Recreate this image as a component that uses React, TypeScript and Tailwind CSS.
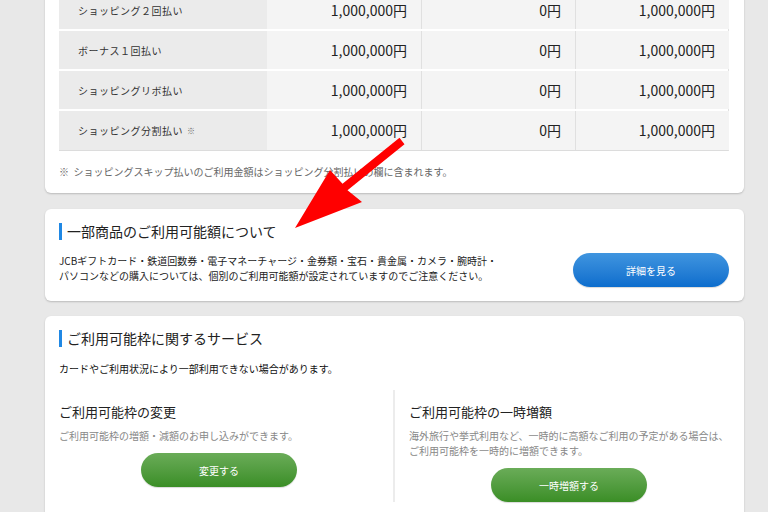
import React from "react";

interface LimitRow {
  label: string;
  note?: boolean;
  limit: string;
  used: string;
  available: string;
}

const rows: LimitRow[] = [
  { label: "ショッピング２回払い", limit: "1,000,000円", used: "0円", available: "1,000,000円" },
  { label: "ボーナス１回払い", limit: "1,000,000円", used: "0円", available: "1,000,000円" },
  { label: "ショッピングリボ払い", limit: "1,000,000円", used: "0円", available: "1,000,000円" },
  { label: "ショッピング分割払い", note: true, limit: "1,000,000円", used: "0円", available: "1,000,000円" },
];

const SectionTitle = ({ children }: { children: React.ReactNode }) => (
  <h2 className="flex items-center gap-[5px] text-[14px] leading-[24px] text-[#222]">
    <span className="w-[3px] h-[17px] bg-[#2088e4]" />
    {children}
  </h2>
);

const GreenButton = ({ label }: { label: string }) => (
  <button className="mx-auto flex h-[34px] w-[156px] items-center justify-center rounded-full bg-gradient-to-b from-[#6aac58] to-[#3a8e25] text-[10px] text-white shadow-[0_1px_1px_rgba(0,0,0,0.15)]">
    {label}
  </button>
);

const Arrow = () => (
  <svg
    className="pointer-events-none absolute left-0 top-0"
    width="768"
    height="512"
    viewBox="0 0 768 512"
  >
    <polygon
      fill="#ff0000"
      points="399.5,137.8 404.5,144.2 347.5,190.2 362,202 295,228 330,170 342.5,183.8"
    />
  </svg>
);

export default function App() {
  return (
    <div className="relative h-[512px] w-[768px] overflow-hidden bg-[#e8e8e8] font-['Noto_Sans_CJK_JP',sans-serif] text-[#222]">
      {/* 利用可能額テーブル */}
      <section className="-mt-[9px] ml-[45px] w-[699px] rounded-b-[6px] bg-white px-[14px] pb-[13px] shadow-[0_1px_2px_rgba(0,0,0,0.2)]">
        <div className="w-[670px] border-r border-[#e0e0e0]">
          {rows.map((row, i) => (
            <div
              key={row.label}
              className={
                "grid h-[40px] grid-cols-[208px_154px_154px_154px] " +
                (i === rows.length - 1 ? "border-b border-[#dcdcdc]" : "border-b-2 border-white")
              }
            >
              <div className="flex items-center bg-[#ebebeb] pl-[19px] text-[10px] tracking-[0.5px] text-[#333]">
                {row.label}
                {row.note && <span className="ml-[4px] text-[8px] text-[#666]">※</span>}
              </div>
              <div className="flex items-center justify-end bg-[#f4f4f4] pr-[14px] text-[14px]">
                {row.limit}
              </div>
              <div className="flex items-center justify-end border-l border-[#e0e0e0] bg-[#f4f4f4] pr-[14px] text-[14px]">
                {row.used}
              </div>
              <div className="flex items-center justify-end border-l border-[#e0e0e0] bg-[#f4f4f4] pr-[14px] text-[14px]">
                {row.available}
              </div>
            </div>
          ))}
        </div>
        <p className="mt-[13px] text-[10px] leading-[16px] text-[#666]">
          ※&nbsp;&nbsp;ショッピングスキップ払いのご利用金額はショッピング分割払いの欄に含まれます。
        </p>
      </section>

      {/* 一部商品 */}
      <section className="ml-[45px] mt-[16px] w-[699px] rounded-[6px] bg-white px-[14px] pb-[14px] pt-[10px] shadow-[0_1px_2px_rgba(0,0,0,0.2)]">
        <SectionTitle>一部商品のご利用可能額について</SectionTitle>
        <div className="mt-[10px] flex items-start justify-between pr-px">
          <p className="whitespace-nowrap text-[10px] leading-[15px] text-[#222]">
            JCBギフトカード・鉄道回数券・電子マネーチャージ・金券類・宝石・貴金属・カメラ・腕時計・
            <br />
            パソコンなどの購入については、個別のご利用可能額が設定されていますのでご注意ください。
          </p>
          <button className="flex h-[34px] w-[156px] items-center justify-center rounded-full bg-gradient-to-b from-[#3f95df] to-[#0a6dcd] text-[10px] text-white shadow-[0_1px_1px_rgba(0,0,0,0.15)]">
            詳細を見る
          </button>
        </div>
      </section>

      {/* サービス */}
      <section className="ml-[45px] mt-[15px] w-[699px] rounded-[6px] bg-white px-[14px] pb-[20px] pt-[10px] shadow-[0_1px_2px_rgba(0,0,0,0.2)]">
        <SectionTitle>ご利用可能枠に関するサービス</SectionTitle>
        <p className="mt-[11px] text-[10px] leading-[16px] text-[#111]">
          カードやご利用状況により一部利用できない場合があります。
        </p>
        <div className="mt-[13px] grid grid-cols-[334px_336px]">
          <div className="pr-[14px] pt-[12px]">
            <h3 className="text-[13px] leading-[20px] text-[#222]">ご利用可能枠の変更</h3>
            <p className="mt-[6px] text-[10px] leading-[15px] text-[#888]">
              ご利用可能枠の増額・減額のお申し込みができます。
            </p>
            <div className="mt-[10px]">
              <GreenButton label="変更する" />
            </div>
          </div>
          <div className="border-l-2 border-[#ececec] pl-[14px] pt-[12px]">
            <h3 className="text-[13px] leading-[20px] text-[#222]">ご利用可能枠の一時増額</h3>
            <p className="mt-[6px] whitespace-nowrap text-[10px] leading-[15px] text-[#888]">
              海外旅行や挙式利用など、一時的に高額なご利用の予定がある場合は、
              <br />
              ご利用可能枠を一時的に増額できます。
            </p>
            <div className="mt-[10px]">
              <GreenButton label="一時増額する" />
            </div>
          </div>
        </div>
      </section>

      <Arrow />
    </div>
  );
}
